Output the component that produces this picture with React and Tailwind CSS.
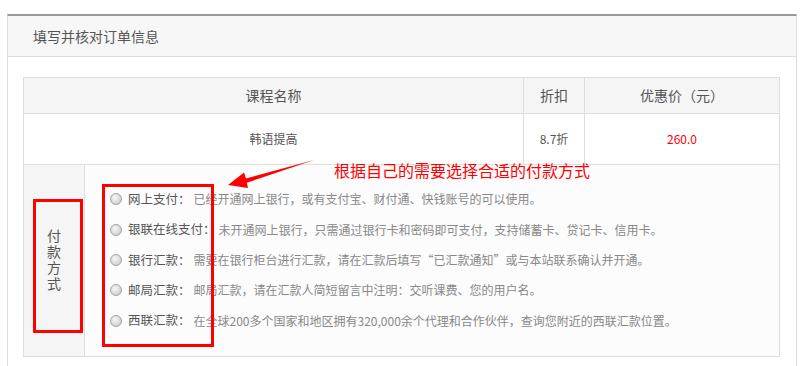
const payments = [
  ["网上支付：", "已经开通网上银行，或有支付宝、财付通、快钱账号的可以使用。"],
  ["银联在线支付：", "未开通网上银行，只需通过银行卡和密码即可支付，支持储蓄卡、贷记卡、信用卡。"],
  ["银行汇款：", "需要在银行柜台进行汇款，请在汇款后填写“已汇款通知”或与本站联系确认并开通。"],
  ["邮局汇款：", "邮局汇款，请在汇款人简短留言中注明：交听课费、您的用户名。"],
  ["西联汇款：", "在全球200多个国家和地区拥有320,000余个代理和合作伙伴，查询您附近的西联汇款位置。"],
];

function Radio() {
  return (
    <span className="w-[12px] h-[12px] shrink-0 rounded-full border border-[#a3a3a3] bg-radial-[at_40%_35%] from-[#f7f7f7] to-[#c4c4c4]" />
  );
}

export default function App() {
  return (
    <div className="relative h-[366px] overflow-hidden bg-white pt-[14px] font-[family-name:'Noto_Sans_CJK_SC','Liberation_Sans',sans-serif]">
      <div className="ml-[7px] w-[790px] border-x border-[#ddd] border-t-2 border-t-[#999] pb-[40px]">
        <div className="h-[41px] bg-[#f7f7f7] border-b border-[#ddd] pl-[25px] flex items-center text-[14px] text-[#555]">
          填写并核对订单信息
        </div>

        <div className="pt-[20px] pl-[15px]">
          <div className="w-[757px] border border-[#ddd] text-[#555]">
            <div className="grid grid-cols-[500px_61px_194px] h-[36px] bg-[#f5f5f5] border-b border-[#ddd] text-[14px]">
              <div className="flex items-center justify-center border-r border-[#ddd]">课程名称</div>
              <div className="flex items-center justify-center border-r border-[#ddd]">折扣</div>
              <div className="flex items-center justify-center">优惠价（元）</div>
            </div>

            <div className="grid grid-cols-[500px_61px_194px] h-[51px] bg-white border-b border-[#ddd] text-[12px]">
              <div className="flex items-center justify-center border-r border-[#ddd]">韩语提高</div>
              <div className="flex items-center justify-center border-r border-[#ddd]">8.7折</div>
              <div className="flex items-center justify-center text-[#f00]">260.0</div>
            </div>

            <div className="flex h-[191px]">
              <div className="w-[61px] shrink-0 bg-[#f5f5f5] border-r border-[#ddd] flex items-center justify-center">
                <span className="[writing-mode:vertical-lr] text-[14px] leading-[18px] tracking-[2px] text-[#555]">
                  付款方式
                </span>
              </div>
              <div className="flex-1 bg-[#fcfcfc] pl-[25px] pt-[19px]">
                {payments.map(([label, desc]) => (
                  <div key={label} className="h-[30.4px] flex items-center text-[12px]">
                    <Radio />
                    <span className="ml-[6px] text-[#555] text-[12.5px] font-normal">{label}</span>
                    <span className="ml-[3px] text-[#888]">{desc}</span>
                  </div>
                ))}
              </div>
            </div>
          </div>
        </div>
      </div>

      {/* annotations */}
      <div className="absolute left-[33px] top-[199px] w-[50px] h-[134px] border-[3px] border-[#f00]" />
      <div className="absolute left-[102px] top-[184px] w-[112px] h-[163px] border-[3px] border-[#f00]" />
      <div className="absolute left-[334px] top-[159px] text-[16px] leading-[22px] text-[#f00]">
        根据自己的需要选择合适的付款方式
      </div>
      <svg className="absolute left-0 top-0" width="801" height="366" viewBox="0 0 801 366">
        <polygon
          points="314,160 246,178.5 244,172.5 228,185 248,188 246.8,182.8"
          fill="#f00"
        />
      </svg>
    </div>
  );
}
